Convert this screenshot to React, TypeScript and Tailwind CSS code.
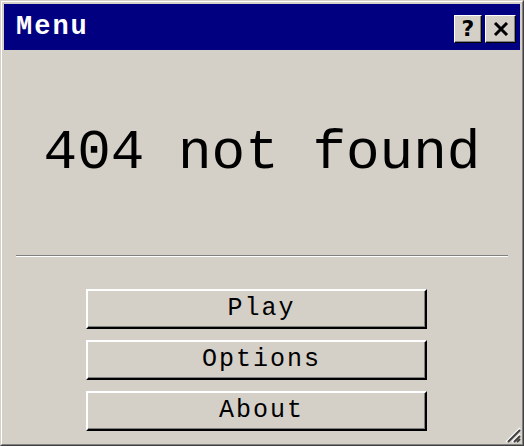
import React from 'react';

const mono = { fontFamily: '"Liberation Mono", "DejaVu Sans Mono", monospace' };

const TitleButton: React.FC<{ children: React.ReactNode; w: string }> = ({ children, w }) => (
  <div className={`${w} h-[28px] bg-[#d4d0c8] border-t border-l border-white border-b border-r border-b-black border-r-black shadow-[inset_-1px_-1px_0_#808080] flex items-center justify-center`}>
    {children}
  </div>
);

const MenuButton: React.FC<{ label: string }> = ({ label }) => (
  <button
    className="w-[341px] h-[40px] pl-[10px] bg-[#d4d0c8] border-t-2 border-l-2 border-white border-b-2 border-r-2 border-b-black border-r-black shadow-[inset_-1px_-1px_0_#808080] flex items-center justify-center text-black text-[25px] tracking-[2px]"
    style={mono}
  >
    {label}
  </button>
);

export default function App() {
  return (
    <div className="w-[524px] h-[446px] border border-t-[#d4d0c8] border-l-[#d4d0c8] border-b-[#404040] border-r-[#404040]">
      <div className="relative w-full h-full bg-[#d4d0c8] border border-t-white border-l-white border-b-[#808080] border-r-[#808080] p-[2px] flex flex-col">
        {/* title bar */}
        <div className="h-[46px] bg-[#000080] flex items-center justify-between pl-3 pr-1">
          <span className="text-white text-[27px] tracking-[2px] leading-none font-bold" style={mono}>
            Menu
          </span>
          <div className="flex gap-[3px] mt-[3px]">
            <TitleButton w="w-[28px]">
              <span className="text-black text-[22px] font-bold leading-none" style={{ fontFamily: '"DejaVu Sans", sans-serif' }}>
                ?
              </span>
            </TitleButton>
            <TitleButton w="w-[31px]">
              <svg width="16" height="14" viewBox="0 0 16 14">
                <path d="M2 1 L14 13 M14 1 L2 13" stroke="black" strokeWidth="3" />
              </svg>
            </TitleButton>
          </div>
        </div>

        {/* content */}
        <div className="h-[205px] flex items-center justify-center">
          <span className="text-black text-[56px] leading-none" style={mono}>
            404 not found
          </span>
        </div>
        <div className="mx-3 border-t border-[#808080] border-b border-b-white" />
        <div className="mt-[32px] pr-[11px] flex flex-col items-center gap-[11px]">
          <MenuButton label="Play" />
          <MenuButton label="Options" />
          <MenuButton label="About" />
        </div>

        {/* resize grip */}
        <svg className="absolute right-[1px] bottom-[1px]" width="18" height="18" viewBox="0 0 18 18">
          <path d="M17 3 L3 17" stroke="white" strokeWidth="1.5" />
          <path d="M17 5 L5 17" stroke="#404040" strokeWidth="2" />
          <path d="M17 9 L9 17" stroke="white" strokeWidth="1.5" />
          <path d="M17 11 L11 17" stroke="#404040" strokeWidth="2" />
          <path d="M17 14 L14 17" stroke="#404040" strokeWidth="2" />
        </svg>
      </div>
    </div>
  );
}
